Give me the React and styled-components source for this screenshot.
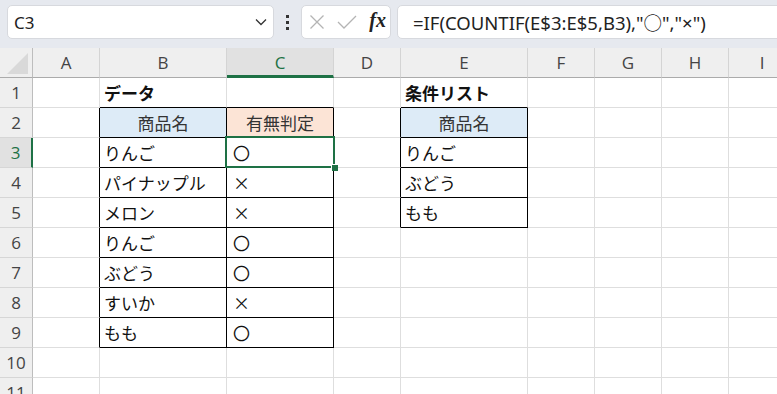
import React from "react";
import styled, { createGlobalStyle } from "styled-components";

const GlobalStyle = createGlobalStyle`
  html, body {
    margin: 0;
    padding: 0;
    background: #fff;
    overflow: hidden;
  }
  body {
    font-family: "Noto Sans", "Noto Sans CJK JP", sans-serif;
  }
`;

const GREEN = "#1e7145";
const GRID = "#dedede";
const COLS = [33, 67, 127, 107, 67, 127, 67, 67, 67, 67];
const LETTERS = ["A", "B", "C", "D", "E", "F", "G", "H", "I"];
const ROWS = 11;
const SEL = { r: 3, c: 2 };

// cell data by row -> col index (0 = A)
const DATA = {
  1: { 1: { v: "データ", bold: true }, 4: { v: "条件リスト", bold: true } },
  2: {
    1: { v: "商品名", center: true, bg: "#ddebf7" },
    2: { v: "有無判定", center: true, bg: "#fce4d6" },
    4: { v: "商品名", center: true, bg: "#ddebf7" },
  },
};
const items = ["りんご", "パイナップル", "メロン", "りんご", "ぶどう", "すいか", "もも"];
const marks = ["〇", "×", "×", "〇", "〇", "×", "〇"];
const list = ["りんご", "ぶどう", "もも"];
items.forEach((v, i) => {
  const r = i + 3;
  DATA[r] = { ...(DATA[r] || {}), 1: { v }, 2: { v: marks[i] } };
});
list.forEach((v, i) => {
  const r = i + 3;
  DATA[r] = { ...DATA[r], 4: { v } };
});

const inTable = (r, c) =>
  (c >= 1 && c <= 2 && r >= 2 && r <= 9) || (c === 4 && r >= 2 && r <= 5);

const Toolbar = styled.div`
  display: flex;
  align-items: center;
  height: 48px;
  box-sizing: border-box;
  padding: 5px 0 9px 7px;
  background: #e6e9ef;
  overflow: hidden;
`;

const Box = styled.div`
  height: 34px;
  box-sizing: border-box;
  background: #fff;
  border: 1px solid #d7d9de;
  border-radius: 5px;
  display: flex;
  align-items: center;
`;

const NameBox = styled(Box)`
  width: 267px;
  justify-content: space-between;
  padding: 0 6px 0 6px;
  font-size: 17px;
  color: #222;
`;

const Dots = styled.div`
  width: 27px;
  display: flex;
  flex-direction: column;
  align-items: center;
  gap: 3px;
  span {
    width: 3px;
    height: 3px;
    background: #333;
  }
`;

const FxButtons = styled(Box)`
  width: 90px;
  padding: 0 4px 0 7px;
  justify-content: space-between;
`;

const Fx = styled.span`
  font-family: "Liberation Serif", "DejaVu Serif", serif;
  font-style: italic;
  font-weight: bold;
  font-size: 20px;
  color: #222;
  margin-top: -3px;
`;

const FormulaInput = styled(Box)`
  flex: 1;
  margin-left: 6px;
  margin-right: -12px;
  padding-left: 15px;
  font-size: 18.5px;
  color: #222;
  white-space: nowrap;
`;

const Sheet = styled.div`
  display: grid;
  grid-template-columns: ${COLS.map((w) => w + "px").join(" ")};
  grid-template-rows: repeat(${ROWS + 1}, 30px);
  overflow: hidden;
  width: 777px;
  height: 346px;
`;

const HeadCell = styled.div`
  box-sizing: border-box;
  background: ${(p) => (p.$sel ? "#e1e1e1" : "#efefef")};
  color: ${(p) => (p.$sel ? GREEN : "#444")};
  font-family: "Open Sans", "Noto Sans", sans-serif;
  font-size: 17px;
  display: flex;
  align-items: center;
  justify-content: center;
  position: relative;
`;

const ColHead = styled(HeadCell)`
  border-right: 1px solid #d4d4d4;
  border-bottom: ${(p) => (p.$sel ? `3px solid ${GREEN}` : "1px solid #ababab")};
  padding-top: ${(p) => (p.$sel ? "2px" : "0")};
`;

const RowHead = styled(HeadCell)`
  border-bottom: 1px solid #d6d6d6;
  border-right: ${(p) => (p.$sel ? `2px solid ${GREEN}` : "1px solid #bdbdbd")};
`;

const Corner = styled(HeadCell)`
  border-right: 1px solid #bdbdbd;
  border-bottom: 1px solid #ababab;
  &::after {
    content: "";
    position: absolute;
    right: 4px;
    bottom: 3px;
    width: 21px;
    height: 21px;
    background: #d9d9d9;
    clip-path: polygon(100% 0, 100% 100%, 0 100%);
  }
`;

const Cell = styled.div`
  box-sizing: border-box;
  position: relative;
  border-right: 1px solid ${(p) => p.$right};
  border-bottom: 1px solid ${(p) => p.$bottom};
  background: ${(p) => p.$bg || "#fff"};
  font-family: "Noto Sans CJK JP", "Noto Sans", sans-serif;
  font-size: 17px;
  font-weight: ${(p) => (p.$bold ? 700 : 400)};
  color: ${(p) => (p.$center ? "#333" : "#111")};
  display: flex;
  align-items: center;
  justify-content: ${(p) => (p.$center ? "center" : "flex-start")};
  padding-left: ${(p) => (p.$center ? "0" : p.$mark ? "6px" : "4px")};
  white-space: nowrap;
`;

const Selection = styled.div`
  position: absolute;
  z-index: 2;
  left: -2px;
  top: -2px;
  width: 110px;
  height: 32px;
  box-sizing: border-box;
  border: 2px solid ${GREEN};
  pointer-events: none;
  &::after {
    content: "";
    position: absolute;
    right: -5px;
    bottom: -5px;
    width: 6px;
    height: 6px;
    background: ${GREEN};
    border-left: 1px solid #fff;
    border-top: 1px solid #fff;
  }
`;

const Chevron = () => (
  <svg width="12" height="8" viewBox="0 0 12 8">
    <path d="M1 1.5 L6 6.5 L11 1.5" fill="none" stroke="#333" strokeWidth="1.3" />
  </svg>
);

const Cross = () => (
  <svg width="16" height="16" viewBox="0 0 16 16">
    <path d="M1.5 1.5 L14.5 14.5 M14.5 1.5 L1.5 14.5" stroke="#b4b4b4" strokeWidth="1.3" />
  </svg>
);

const Check = () => (
  <svg width="20" height="14" viewBox="0 0 20 14">
    <path d="M1 7 L7 13 L19 1" fill="none" stroke="#b4b4b4" strokeWidth="1.3" />
  </svg>
);

export default function App() {
  const cells = [];
  cells.push(<Corner key="corner" />);
  LETTERS.forEach((l, c) => {
    cells.push(
      <ColHead key={"h" + l} $sel={c === SEL.c}>
        {l}
      </ColHead>
    );
  });
  for (let r = 1; r <= ROWS; r++) {
    cells.push(
      <RowHead key={"r" + r} $sel={r === SEL.r}>
        {r}
      </RowHead>
    );
    LETTERS.forEach((l, c) => {
      const d = (DATA[r] && DATA[r][c]) || {};
      const right = inTable(r, c) || inTable(r, c + 1) ? "#000" : GRID;
      const bottom = inTable(r, c) || inTable(r + 1, c) ? "#000" : GRID;
      cells.push(
        <Cell
          key={l + r}
          $right={right}
          $bottom={bottom}
          $bg={d.bg}
          $bold={d.bold}
          $center={d.center}
          $mark={c === 2 && r >= 3}
        >
          {d.v}
          {r === SEL.r && c === SEL.c && <Selection />}
        </Cell>
      );
    });
  }

  return (
    <>
      <GlobalStyle />
      <Toolbar>
        <NameBox>
          <span>C3</span>
          <Chevron />
        </NameBox>
        <Dots>
          <span />
          <span />
          <span />
        </Dots>
        <FxButtons>
          <Cross />
          <Check />
          <Fx>fx</Fx>
        </FxButtons>
        <FormulaInput>=IF(COUNTIF(E$3:E$5,B3),"○","×")</FormulaInput>
      </Toolbar>
      <Sheet>{cells}</Sheet>
    </>
  );
}
